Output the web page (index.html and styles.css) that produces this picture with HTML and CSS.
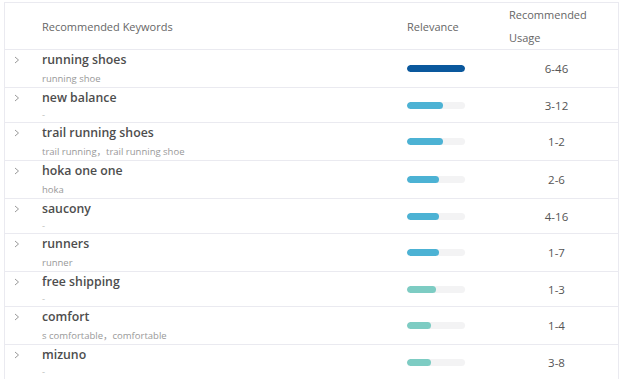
FILE: index.html
```html
<!DOCTYPE html>
<html lang="en">
<head>
  <meta charset="UTF-8">
  <title>Recommended Keywords</title>
  <link rel="stylesheet" href="styles.css">
</head>
<body>
  <div class="kw-table">
    <!-- Header -->
    <div class="kw-head">
      <div></div>
      <div class="head-cell">Recommended Keywords</div>
      <div class="head-cell">Relevance</div>
      <div class="head-cell usage-head">Recommended<br>Usage</div>
    </div>

    <div class="kw-row">
      <div class="chev"><svg width="6" height="8" viewBox="0 0 6 8"><polyline points="1,1 4.5,4 1,7" /></svg></div>
      <div class="kw-cell">
        <div class="kw-title">running shoes</div>
        <div class="kw-sub">running shoe</div>
      </div>
      <div class="rel-cell"><div class="bar"><div class="fill dark" style="width: 58px"></div></div></div>
      <div class="usage">6-46</div>
    </div>

    <div class="kw-row">
      <div class="chev"><svg width="6" height="8" viewBox="0 0 6 8"><polyline points="1,1 4.5,4 1,7" /></svg></div>
      <div class="kw-cell">
        <div class="kw-title">new balance</div>
        <div class="kw-sub empty">-</div>
      </div>
      <div class="rel-cell"><div class="bar"><div class="fill blue" style="width: 36px"></div></div></div>
      <div class="usage">3-12</div>
    </div>

    <div class="kw-row">
      <div class="chev"><svg width="6" height="8" viewBox="0 0 6 8"><polyline points="1,1 4.5,4 1,7" /></svg></div>
      <div class="kw-cell">
        <div class="kw-title">trail running shoes</div>
        <div class="kw-sub">trail running，trail running shoe</div>
      </div>
      <div class="rel-cell"><div class="bar"><div class="fill blue" style="width: 36px"></div></div></div>
      <div class="usage">1-2</div>
    </div>

    <div class="kw-row">
      <div class="chev"><svg width="6" height="8" viewBox="0 0 6 8"><polyline points="1,1 4.5,4 1,7" /></svg></div>
      <div class="kw-cell">
        <div class="kw-title">hoka one one</div>
        <div class="kw-sub">hoka</div>
      </div>
      <div class="rel-cell"><div class="bar"><div class="fill blue" style="width: 32px"></div></div></div>
      <div class="usage">2-6</div>
    </div>

    <div class="kw-row">
      <div class="chev"><svg width="6" height="8" viewBox="0 0 6 8"><polyline points="1,1 4.5,4 1,7" /></svg></div>
      <div class="kw-cell">
        <div class="kw-title">saucony</div>
        <div class="kw-sub empty">-</div>
      </div>
      <div class="rel-cell"><div class="bar"><div class="fill blue" style="width: 32px"></div></div></div>
      <div class="usage">4-16</div>
    </div>

    <div class="kw-row">
      <div class="chev"><svg width="6" height="8" viewBox="0 0 6 8"><polyline points="1,1 4.5,4 1,7" /></svg></div>
      <div class="kw-cell">
        <div class="kw-title">runners</div>
        <div class="kw-sub">runner</div>
      </div>
      <div class="rel-cell"><div class="bar"><div class="fill blue" style="width: 32px"></div></div></div>
      <div class="usage">1-7</div>
    </div>

    <div class="kw-row">
      <div class="chev"><svg width="6" height="8" viewBox="0 0 6 8"><polyline points="1,1 4.5,4 1,7" /></svg></div>
      <div class="kw-cell">
        <div class="kw-title">free shipping</div>
        <div class="kw-sub empty">-</div>
      </div>
      <div class="rel-cell"><div class="bar"><div class="fill teal" style="width: 29px"></div></div></div>
      <div class="usage">1-3</div>
    </div>

    <div class="kw-row">
      <div class="chev"><svg width="6" height="8" viewBox="0 0 6 8"><polyline points="1,1 4.5,4 1,7" /></svg></div>
      <div class="kw-cell">
        <div class="kw-title">comfort</div>
        <div class="kw-sub">s comfortable，comfortable</div>
      </div>
      <div class="rel-cell"><div class="bar"><div class="fill teal" style="width: 24px"></div></div></div>
      <div class="usage">1-4</div>
    </div>

    <div class="kw-row">
      <div class="chev"><svg width="6" height="8" viewBox="0 0 6 8"><polyline points="1,1 4.5,4 1,7" /></svg></div>
      <div class="kw-cell">
        <div class="kw-title">mizuno</div>
        <div class="kw-sub empty">-</div>
      </div>
      <div class="rel-cell"><div class="bar"><div class="fill teal" style="width: 24px"></div></div></div>
      <div class="usage">3-8</div>
    </div>
  </div>
</body>
</html>
```

FILE: styles.css
```css
body {
  margin: 0;
  padding: 0;
  overflow: hidden;
  background-color: #fff;
  font-family: 'Open Sans', 'Noto Sans CJK SC', sans-serif;
}

.kw-table {
  margin: 2px 0 0 4px;
  width: 613px;
  border: 1px solid #eaeaf0;
  border-bottom: none;
}

/* Shared grid for header and rows */
.kw-head,
.kw-row {
  display: grid;
  grid-template-columns: 37px 365px 88px 1fr;
  border-bottom: 1px solid #eaeaf0;
}

.kw-head {
  align-items: center;
  height: 46px;
}

.head-cell {
  font-size: 11px;
  line-height: 23px;
  color: #666;
}

.usage-head {
  padding-left: 14px;
}

/* Body rows */
.kw-row {
  align-items: center;
}

.chev {
  align-self: start;
  padding: 6px 0 0 9px;
}

.chev svg {
  display: block;
}

.chev polyline {
  fill: none;
  stroke: #999;
  stroke-width: 1;
}

.kw-title {
  font-size: 12.3px;
  font-weight: 600;
  line-height: 20px;
  color: #4d4d4d;
}

.kw-sub {
  font-size: 9.5px;
  line-height: 17px;
  color: #999;
}

.kw-sub.empty {
  line-height: 14px;
  color: #bbb;
}

.bar {
  width: 58px;
  height: 7px;
  border-radius: 4px;
  background-color: #f3f3f4;
  overflow: hidden;
}

.fill {
  height: 100%;
  border-radius: 4px;
}

.fill.dark {
  background-color: #0a589d;
}

.fill.blue {
  background-color: #4cb2d4;
}

.fill.teal {
  background-color: #7dccc3;
}

.usage {
  text-align: center;
  font-size: 11.5px;
  color: #555;
}
```
